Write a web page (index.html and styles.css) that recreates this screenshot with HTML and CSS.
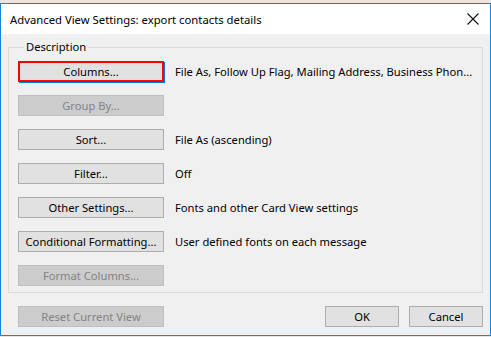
FILE: index.html
```html
<!DOCTYPE html>
<html lang="en">
<head>
    <meta charset="UTF-8">
    <title>Advanced View Settings</title>
    <link rel="stylesheet" href="styles.css">
</head>
<body>
    <div class="window">
        <div class="titlebar">
            <span class="title">Advanced View Settings: export contacts details</span>
            <svg class="close" width="12" height="12" viewBox="0 0 12 12">
                <path d="M0.5 0.5 L11.5 11.5 M11.5 0.5 L0.5 11.5" stroke="#111" stroke-width="1.1" fill="none"/>
            </svg>
        </div>
        <div class="content">
            <fieldset class="group">
                <legend>Description</legend>
                <div class="row">
                    <button class="btn focused">Columns...</button>
                    <span class="desc">File As, Follow Up Flag, Mailing Address, Business Phon...</span>
                </div>
                <div class="row">
                    <button class="btn" disabled>Group By...</button>
                </div>
                <div class="row">
                    <button class="btn">Sort...</button>
                    <span class="desc">File As (ascending)</span>
                </div>
                <div class="row">
                    <button class="btn">Filter...</button>
                    <span class="desc">Off</span>
                </div>
                <div class="row">
                    <button class="btn">Other Settings...</button>
                    <span class="desc">Fonts and other Card View settings</span>
                </div>
                <div class="row">
                    <button class="btn">Conditional Formatting...</button>
                    <span class="desc">User defined fonts on each message</span>
                </div>
                <div class="row">
                    <button class="btn" disabled>Format Columns...</button>
                </div>
            </fieldset>
            <div class="footer">
                <button class="btn" disabled>Reset Current View</button>
                <div class="actions">
                    <button class="btn small">OK</button>
                    <button class="btn small">Cancel</button>
                </div>
            </div>
        </div>
    </div>
</body>
</html>
```

FILE: styles.css
```css
* {
    margin: 0;
    padding: 0;
    box-sizing: border-box;
}

body {
    font-family: 'Noto Sans', 'Open Sans', sans-serif;
    font-size: 11.2px;
    color: #000;
    background: #e6e6e6;
    width: 491px;
    height: 337px;
    overflow: hidden;
}

.window {
    margin-top: 3px;
    width: 491px;
    height: 333px;
    border: 1px solid #1883d7;
    background: #f0f0f0;
}

.titlebar {
    height: 30px;
    background: #fff;
    display: flex;
    align-items: center;
    justify-content: space-between;
    padding: 0 11px 0 9px;
}

.title {
    font-size: 11.3px;
    color: #000;
}

.content {
    padding: 5px 7px 0 7px;
}

.group {
    border: 1px solid #dcdcdc;
    padding: 6px 9px 0 9px;
    height: 254px;
}

.group legend {
    margin-left: 6px;
    padding: 0 2px;
    line-height: 16px;
}

.row {
    display: flex;
    align-items: center;
    gap: 11px;
    height: 21px;
    margin-bottom: 13px;
    white-space: nowrap;
}

.row:last-child {
    margin-bottom: 0;
}

.btn {
    font-family: inherit;
    font-size: 11.2px;
    width: 146px;
    height: 21px;
    background: #e1e1e1;
    border: 1px solid #adadad;
    color: #000;
    white-space: nowrap;
}

.btn:disabled {
    background: #cccccc;
    border-color: #bfbfbf;
    color: #838383;
}

.btn.focused {
    border: 2px solid #ff0000;
    box-shadow: 1px 1px 0 #0078d7;
}

.btn.small {
    width: 74px;
}

.footer {
    display: flex;
    justify-content: space-between;
    margin-top: 13px;
    padding: 0 0 0 10px;
}

.actions {
    display: flex;
    gap: 10px;
}
```
